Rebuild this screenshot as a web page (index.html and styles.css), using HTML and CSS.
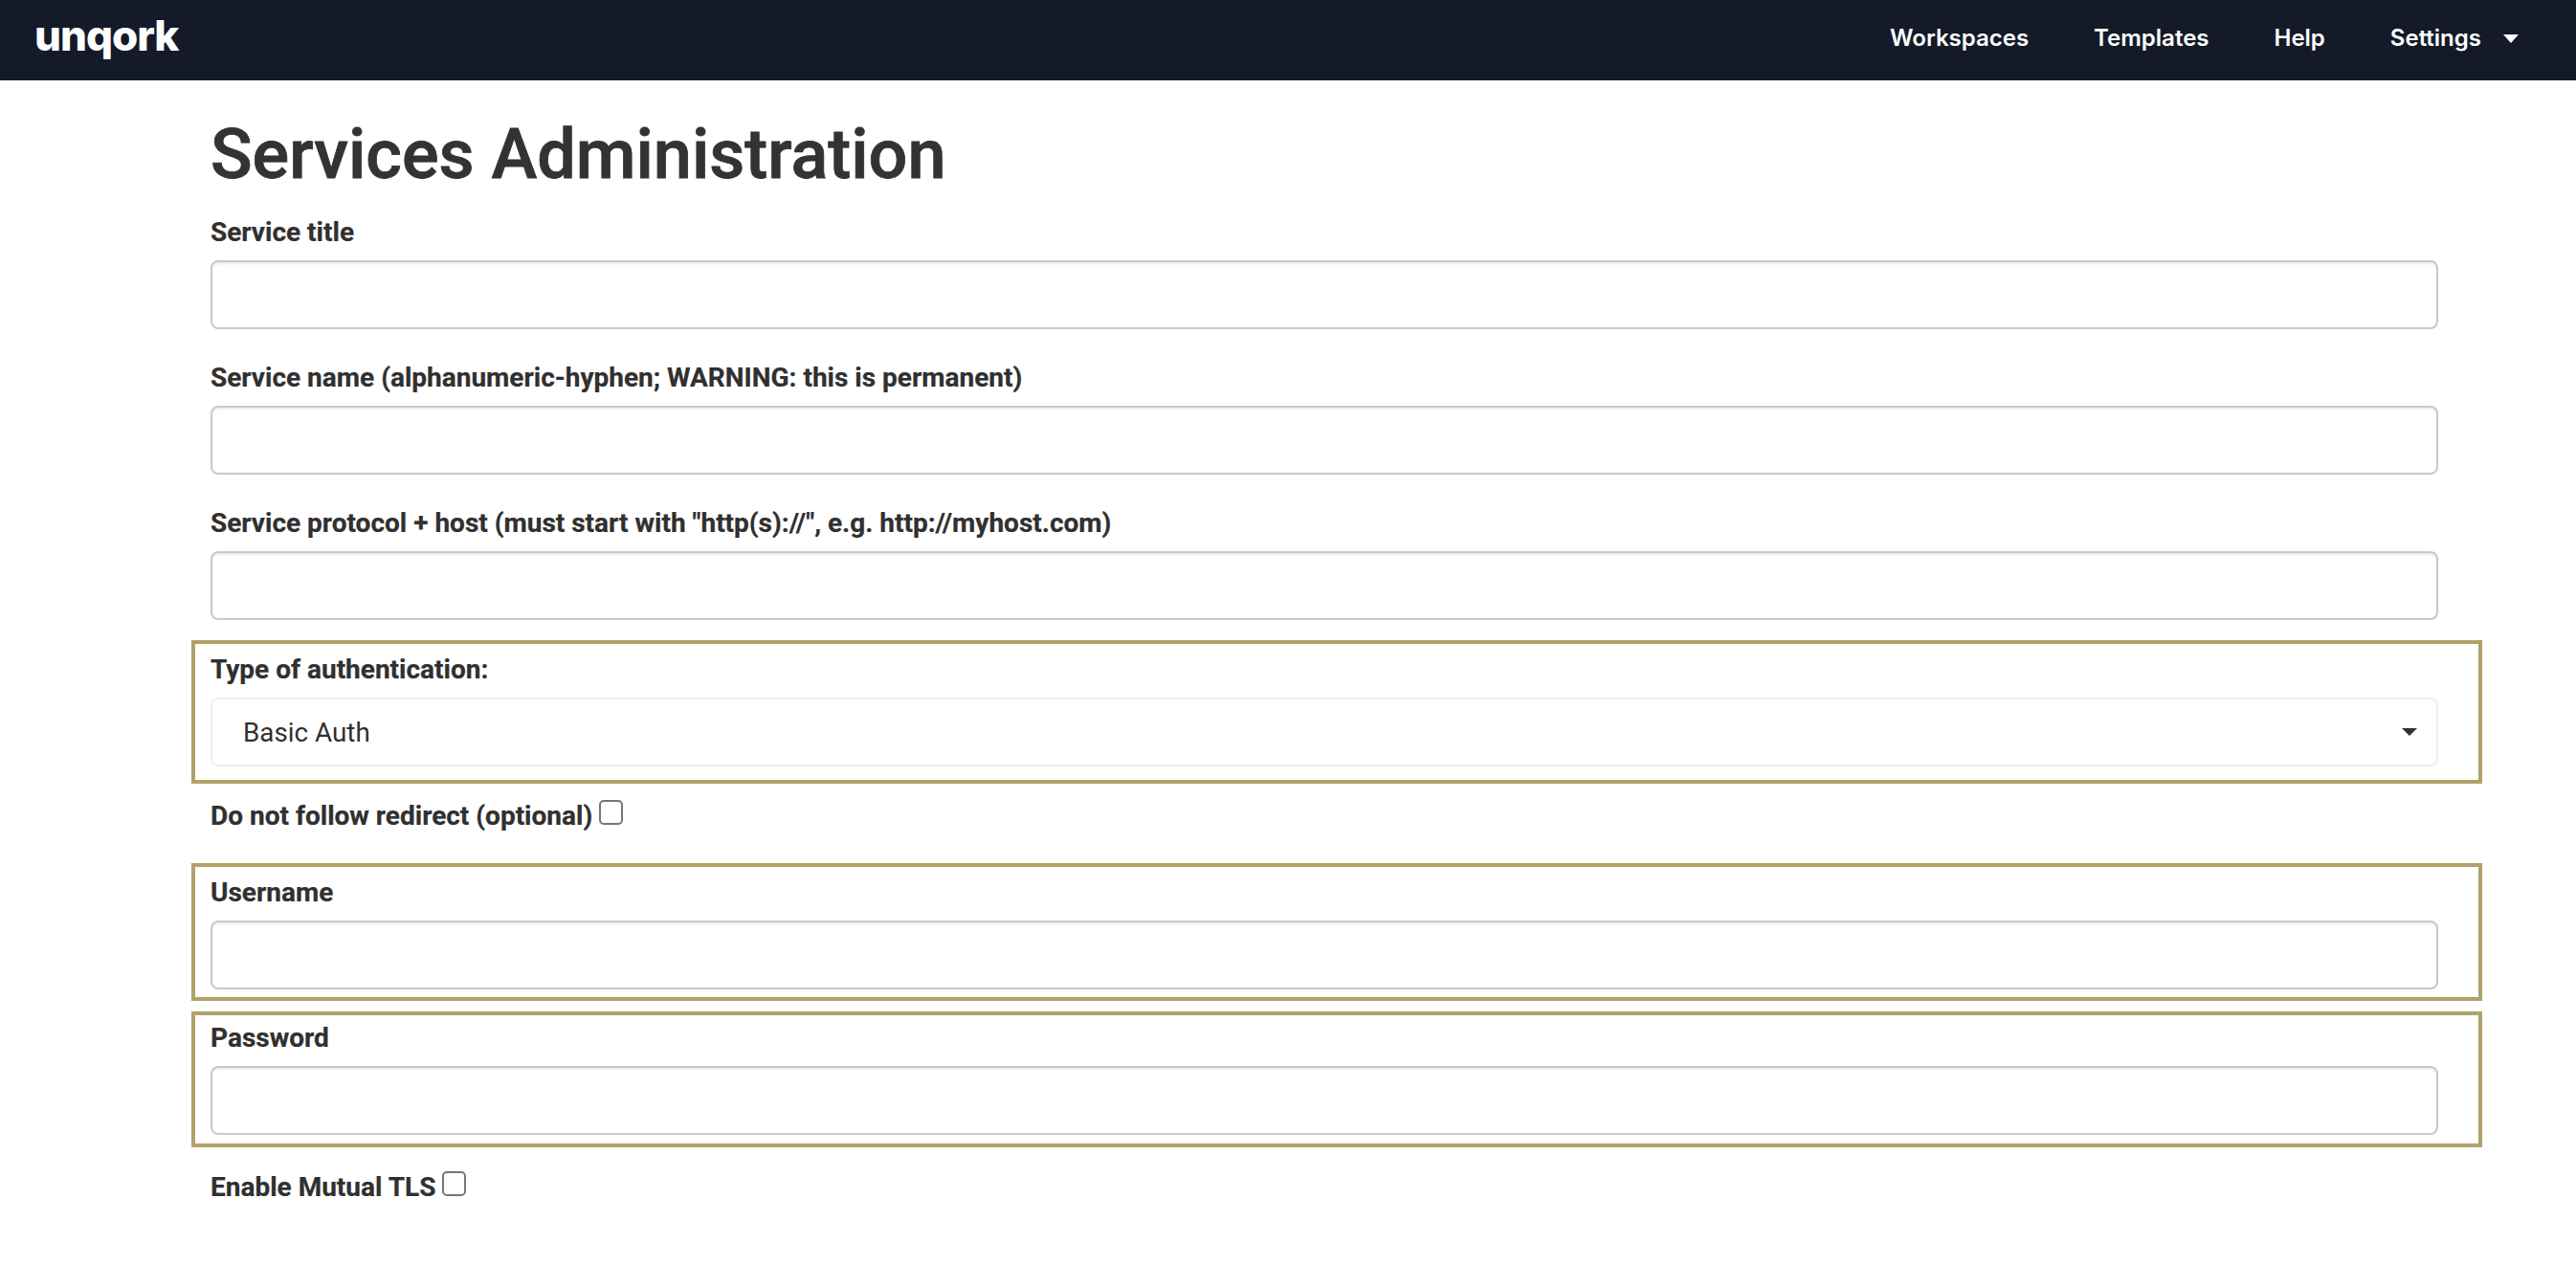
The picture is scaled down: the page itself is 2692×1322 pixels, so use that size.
FILE: index.html
```html
<!DOCTYPE html>
<html lang="en">
<head>
<meta charset="utf-8">
<title>Services Administration</title>
<link rel="stylesheet" href="styles.css">
</head>
<body>
<header class="topbar">
  <a class="logo" href="#">unqork</a>
  <nav class="nav">
    <a href="#">Workspaces</a>
    <a href="#">Templates</a>
    <a href="#">Help</a>
    <a class="settings" href="#">Settings<svg class="nav-caret" viewBox="0 0 16 9" aria-hidden="true"><path d="M0 0h16L8 9z"/></svg></a>
  </nav>
</header>
<main class="page">
  <h1 class="title">Services Administration</h1>
  <form class="form">
    <div class="field">
      <label class="label">Service title</label>
      <input class="input" type="text">
    </div>
    <div class="field">
      <label class="label">Service name (alphanumeric-hyphen; WARNING: this is permanent)</label>
      <input class="input" type="text">
    </div>
    <div class="field field-last">
      <label class="label">Service protocol + host (must start with "http(s)://", e.g. http://myhost.com)</label>
      <input class="input" type="text">
    </div>
    <div class="box box-auth">
      <label class="label">Type of authentication:</label>
      <div class="select"><span>Basic Auth</span><svg class="select-caret" viewBox="0 0 16 8" aria-hidden="true"><path d="M0 0h16L8 8z"/></svg></div>
    </div>
    <div class="check check-redirect">
      <label class="label">Do not follow redirect (optional)</label>
      <input class="checkbox" type="checkbox">
    </div>
    <div class="box box-user">
      <label class="label">Username</label>
      <input class="input" type="text">
    </div>
    <div class="box box-pass">
      <label class="label">Password</label>
      <input class="input" type="password">
    </div>
    <div class="check check-tls">
      <label class="label">Enable Mutual TLS</label>
      <input class="checkbox" type="checkbox">
    </div>
  </form>
</main>
</body>
</html>
```
FILE: styles.css
```css
* { box-sizing: border-box; }
html, body { margin: 0; padding: 0; background: #fff; }
body { font-family: Roboto, "Liberation Sans", sans-serif; color: #303030; height: 1322px; overflow: hidden; }
a { text-decoration: none; color: inherit; }

.topbar { height: 84px; background: #141a28; display: flex; align-items: center; justify-content: space-between; padding: 0 60px 4px 36px; color: #fff; }
.logo { font-family: Inter, sans-serif; font-weight: 800; font-size: 44px; letter-spacing: -1px; line-height: 1; position: relative; top: -3px; }
.nav { display: flex; gap: 68px; font-family: Inter, sans-serif; font-weight: 600; font-size: 24px; line-height: 32px; }
.settings { display: flex; align-items: center; gap: 23px; }
.nav-caret { width: 16px; height: 9px; fill: #fff; }

.page { padding: 0 144px 0 220px; }
.title { margin: 0; padding-top: 42px; height: 138px; font-size: 72px; font-weight: 500; line-height: 72px; color: #333; -webkit-text-stroke: 0.8px #333; }

.label { display: block; height: 40px; padding-top: 2px; font-size: 28px; font-weight: 700; line-height: 38px; color: #303030; -webkit-text-stroke: 0.2px #303030; }
.field { margin-bottom: 30px; }
.field-last { margin-bottom: 21px; }
.input { display: block; width: 100%; height: 72px; margin-top: 10px; background: #fff; border: 2px solid #c9c9c9; border-radius: 8px; outline: 0; box-shadow: inset 0 2px 2px rgba(0, 0, 0, 0.075); }

.box { margin: 0 -46px 0 -20px; padding: 6px 42px 0 16px; border: 4px solid #b0a26a; }
.box-auth { height: 150px; }
.box-user { height: 144px; }
.box-pass { height: 142px; margin-top: 11px; padding-top: 3px; }

.select { display: flex; align-items: center; justify-content: space-between; height: 72px; margin-top: 10px; padding: 0 20px 0 32px; border: 2px solid #f0f0f0; border-radius: 8px; font-size: 27.8px; font-weight: 400; color: #303030; }
.select-caret { width: 16px; height: 8px; fill: #333; }

.check { display: flex; align-items: flex-start; gap: 7px; }
.check-redirect { margin-top: 13px; height: 70px; }
.check-tls { margin-top: 21px; }
.checkbox { appearance: none; -webkit-appearance: none; width: 25px; height: 26px; margin: 4px 0 0; background: #fff; border: 2px solid #767676; border-radius: 5px; }
```
